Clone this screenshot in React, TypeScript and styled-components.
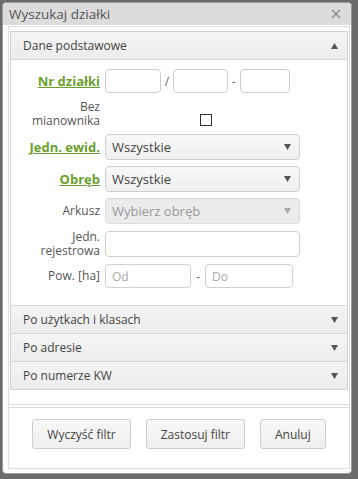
import React from "react";
import styled, { createGlobalStyle } from "styled-components";

const Global = createGlobalStyle`
  html, body { margin: 0; padding: 0; background: #6b6b6b; }
  body { font-family: "Open Sans", "Liberation Sans", sans-serif; }
  * { box-sizing: border-box; }
`;

const Dialog = styled.div`
  margin: 2px 0 0 2px;
  width: 350px;
  height: 472px;
  background: #fff;
  border: 1px solid #9c9c9c;
  border-radius: 4px;
  display: flex;
  flex-direction: column;
  overflow: hidden;
`;

const TitleBar = styled.div`
  height: 22px;
  flex: none;
  background: #dcdcdc;
  display: flex;
  align-items: center;
  justify-content: space-between;
  padding: 0 8px 0 6px;
  color: #555;
  font-size: 13.5px;
`;

const Close = styled.svg`
  width: 10px;
  height: 10px;
  margin-right: 2px;
`;

const Body = styled.div`
  flex: 1;
  padding: 1px 1px 4px 5px;
  display: flex;
`;

const Panel = styled.div`
  flex: 1;
  border: 1px solid #dedede;
  display: flex;
  flex-direction: column;
  padding: 4px 1px 0 1px;
`;

const Accordion = styled.div`
  border: 1px solid #d3d3d3;
  display: flex;
  flex-direction: column;
`;

const Header = styled.div<{ $first?: boolean }>`
  height: ${(p) => (p.$first ? 27 : 28)}px;
  display: flex;
  align-items: center;
  justify-content: space-between;
  padding: 0 9px 0 12px;
  background: linear-gradient(#f4f4f4, #ececec);
  border-top: ${(p) => (p.$first ? "none" : "1px solid #d6d6d6")};
  color: #444;
  font-size: 12px;
`;

const Tri = styled.svg`
  width: 7px;
  height: 6px;
  flex: none;
`;

const Content = styled.div`
  border-top: 1px solid #d6d6d6;
  background: #fff;
  padding: 9px 0 17px 4px;
  display: grid;
  grid-template-columns: 85px 1fr;
  column-gap: 5px;
  row-gap: 6px;
  align-items: center;
`;

const Label = styled.div<{ $link?: boolean; $tall?: boolean }>`
  text-align: right;
  font-size: ${(p) => (p.$link ? "13px" : "12px")};
  line-height: 14px;
  padding-top: ${(p) => (p.$tall ? 1 : 0)}px;
  font-weight: ${(p) => (p.$link ? 700 : 400)};
  color: ${(p) => (p.$link ? "#6a9f2c" : "#555")};
  text-decoration: ${(p) => (p.$link ? "underline" : "none")};
`;

const Controls = styled.div`
  display: flex;
  align-items: center;
`;

const CheckCell = styled.div`
  align-self: start;
  padding: 15px 0 0 95px;
`;

const Input = styled.div<{ $w: number; $h?: number }>`
  width: ${(p) => p.$w}px;
  height: ${(p) => p.$h ?? 24}px;
  border: 1px solid #cfcfcf;
  border-radius: 4px;
  background: #fff;
  font-size: 12px;
  color: #aaa;
  display: flex;
  align-items: center;
  padding-left: 6px;
`;

const Sep = styled.span<{ $w: number }>`
  width: ${(p) => p.$w}px;
  text-align: center;
  font-size: 12px;
  color: #666;
`;

const Check = styled.div`
  width: 12px;
  height: 12px;
  border: 1px solid #333;
`;

const Select = styled.div<{ $disabled?: boolean }>`
  width: 195px;
  height: 26px;
  border: 1px solid ${(p) => (p.$disabled ? "#dcdcdc" : "#cfcfcf")};
  border-radius: 4px;
  background: ${(p) => (p.$disabled ? "#ececec" : "linear-gradient(#f9f9f9, #efefef)")};
  display: flex;
  align-items: center;
  justify-content: space-between;
  padding: 0 8px 0 6px;
  font-size: 13px;
  color: ${(p) => (p.$disabled ? "#999" : "#444")};
`;

const Spacer = styled.div`
  flex: 1;
`;

const Footer = styled.div`
  border-top: 4px double #dcdcdc;
  margin: 0 -1px;
  height: 64px;
  display: flex;
  align-items: flex-start;
  justify-content: center;
  gap: 15px;
  padding-top: 11px;
`;

const Button = styled.button`
  height: 30px;
  padding: 0 14px;
  border: 1px solid #cdcdcd;
  border-radius: 3px;
  background: linear-gradient(#f7f7f7, #efefef);
  font-family: "Open Sans", "Liberation Sans", sans-serif;
  font-size: 12px;
  color: #444;
`;

function Up() {
  return (
    <Tri viewBox="0 0 7 6">
      <path d="M0 6 L3.5 0 L7 6 Z" fill="#555" />
    </Tri>
  );
}

function Down({ light }: { light?: boolean }) {
  return (
    <Tri viewBox="0 0 7 6">
      <path d="M0 0 L7 0 L3.5 6 Z" fill={light ? "#aaa" : "#555"} />
    </Tri>
  );
}

export default function App() {
  return (
    <>
      <Global />
      <Dialog>
        <TitleBar>
          <span>Wyszukaj działki</span>
          <Close viewBox="0 0 10 10">
            <path d="M1 1 L9 9 M9 1 L1 9" stroke="#8a8a8a" strokeWidth="1.3" fill="none" />
          </Close>
        </TitleBar>
        <Body>
          <Panel>
            <Accordion>
              <Header $first>
                <span>Dane podstawowe</span>
                <Up />
              </Header>
              <Content>
                <Label $link>Nr działki</Label>
                <Controls>
                  <Input $w={56} />
                  <Sep $w={12}>/</Sep>
                  <Input $w={55} />
                  <Sep $w={12}>-</Sep>
                  <Input $w={50} />
                </Controls>
                <Label $tall>Bez<br />mianownika</Label>
                <CheckCell>
                  <Check />
                </CheckCell>
                <Label $link>Jedn. ewid.</Label>
                <Controls>
                  <Select>
                    <span>Wszystkie</span>
                    <Down />
                  </Select>
                </Controls>
                <Label $link>Obręb</Label>
                <Controls>
                  <Select>
                    <span>Wszystkie</span>
                    <Down />
                  </Select>
                </Controls>
                <Label>Arkusz</Label>
                <Controls>
                  <Select $disabled>
                    <span>Wybierz obręb</span>
                    <Down light />
                  </Select>
                </Controls>
                <Label>Jedn.<br />rejestrowa</Label>
                <Controls>
                  <Input $w={195} $h={26} />
                </Controls>
                <Label>Pow. [ha]</Label>
                <Controls>
                  <Input $w={86}>Od</Input>
                  <Sep $w={14}>-</Sep>
                  <Input $w={88}>Do</Input>
                </Controls>
              </Content>
              <Header>
                <span>Po użytkach i klasach</span>
                <Down />
              </Header>
              <Header>
                <span>Po adresie</span>
                <Down />
              </Header>
              <Header>
                <span>Po numerze KW</span>
                <Down />
              </Header>
            </Accordion>
            <Spacer />
            <Footer>
              <Button>Wyczyść filtr</Button>
              <Button>Zastosuj filtr</Button>
              <Button>Anuluj</Button>
            </Footer>
          </Panel>
        </Body>
      </Dialog>
    </>
  );
}
